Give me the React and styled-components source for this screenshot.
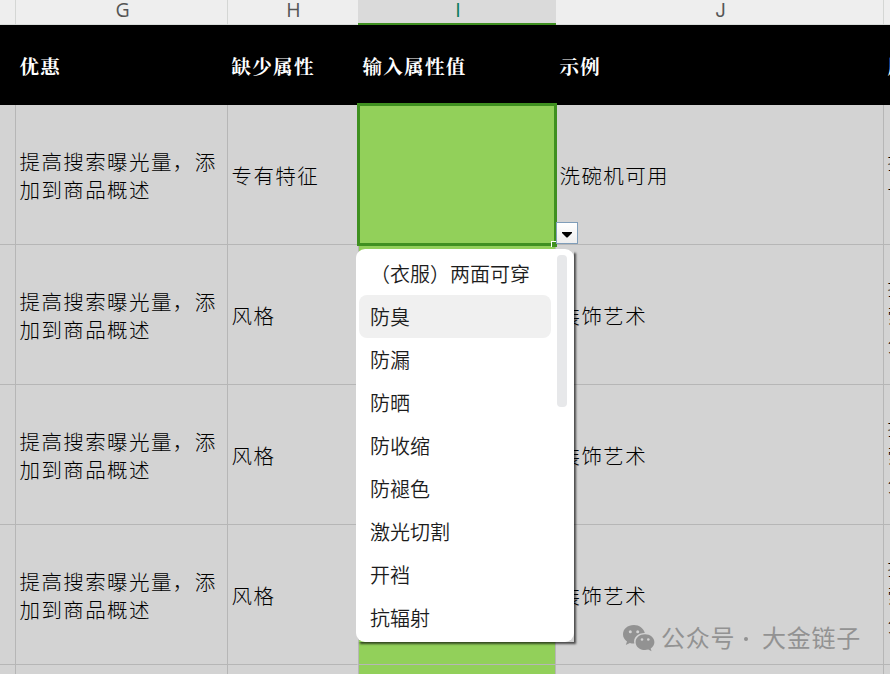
import React from "react";
import styled, { createGlobalStyle } from "styled-components";

const GlobalStyle = createGlobalStyle`
  * { box-sizing: border-box; }
  body { margin: 0; overflow: hidden; }
`;

const Sheet = styled.div`
  position: relative;
  width: 890px;
  height: 674px;
  overflow: hidden;
  background: #d3d3d3;
  color: #000;
  font-family: "Noto Sans CJK SC", sans-serif;
`;

const Row = styled.div`
  display: grid;
  grid-template-columns: 16px 212px 130px 198px 328px 160px;
  height: ${(p) => p.$height}px;
`;

const ColumnLabel = styled.div`
  display: flex;
  justify-content: center;
  height: 25px;
  padding-left: 2px;
  border-right: 1px solid ${(p) => (p.$plain ? "transparent" : "#d4d6d4")};
  border-bottom: 1px solid #d9dcda;
  background: #eeeeee;
  color: #555;
  font-family: ${(p) => (p.$hookless ? "Inter" : '"Open Sans"')}, sans-serif;
  font-size: ${(p) => (p.$hookless ? 18.5 : 19.5)}px;
  line-height: 20px;
  ${(p) =>
    p.$active &&
    `border-right: 0; border-bottom: 2px solid #3f9020; background: #dadada; color: #0d7a5c;`}
`;

const HeadCell = styled.div`
  display: flex;
  align-items: center;
  padding: 1px 0 0 ${(p) => (p.$inset ? 4.5 : 3.5)}px;
  background: #000;
  color: #fff;
  font-family: "Noto Serif CJK SC", "Noto Sans CJK SC", sans-serif;
  font-size: 19.5px;
  font-weight: 700;
  letter-spacing: 1.3px;
  white-space: nowrap;
`;

const Cell = styled.div`
  position: relative;
  display: flex;
  align-items: center;
  padding: 1px 0 0 3.5px;
  border-right: 1px solid ${(p) => (p.$open ? "transparent" : "#b6b6b6")};
  border-bottom: 1px solid #b6b6b6;
  font-size: 20.5px;
  font-weight: 300;
  line-height: 28px;
  letter-spacing: 1.4px;
  white-space: pre;
`;

const InputCell = styled(Cell)`
  z-index: ${(p) => (p.$selected ? 1 : "auto")};
  background: #92d05a;
  border-left: 1px solid #b6b6b6;
`;

const Selection = styled.div`
  position: absolute;
  top: -2px;
  left: -2px;
  width: 200px;
  height: 143px;
  border: 3px solid #3f9020;
`;

const FillHandle = styled.div`
  position: absolute;
  right: -3px;
  bottom: -4px;
  width: 6px;
  height: 6px;
  border-top: 1px solid #fff;
  border-left: 1px solid #fff;
  background: #3f9020;
`;

const ArrowButton = styled.button`
  position: absolute;
  top: 117px;
  left: 197px;
  z-index: 1;
  display: grid;
  place-items: center;
  width: 22px;
  height: 22px;
  padding: 3px 0 0;
  border: 1px solid #7f9db9;
  background: linear-gradient(#fff, #eeeeee);
`;

const Menu = styled.div`
  position: absolute;
  top: 249px;
  left: 356px;
  z-index: 2;
  width: 218px;
  height: 393px;
  box-shadow: 3px 3px 2px -1px rgba(0, 0, 0, 0.65);
`;

const MenuPanel = styled.div`
  display: flex;
  justify-content: space-between;
  height: 100%;
  padding: 3px 7px 3px 3px;
  border-radius: 9px;
  background: #fff;
`;

const Options = styled.ul`
  width: 192px;
  margin: 0;
  padding: 0;
  list-style: none;
`;

const Option = styled.li`
  height: 43px;
  padding-left: 11px;
  border-radius: 8px;
  background: ${(p) => (p.$active ? "#f0f0f0" : "transparent")};
  color: #1c1c1c;
  font-size: 20px;
  font-weight: 350;
  line-height: 43px;
  white-space: nowrap;
`;

const ScrollThumb = styled.div`
  width: 10px;
  height: 152px;
  margin-top: 3px;
  border-radius: 4px;
  background: #e7e8ea;
`;

const Watermark = styled.div`
  position: absolute;
  top: 620px;
  left: 622px;
  display: flex;
  align-items: center;
  height: 36px;
  color: #929292;
  font-size: 24px;
  letter-spacing: 0.7px;
  white-space: nowrap;
`;

const WatermarkName = styled.span`
  margin: -3px 0 0 ${(p) => p.$gap}px;
`;

const Dot = styled.span`
  width: 4px;
  height: 4px;
  margin: 2px 0 0 9px;
  border-radius: 50%;
  background: currentColor;
`;

const rows = [
  { missing: "专有特征", example: "洗碗机可用", extra: "提高\n一" },
  { missing: "风格", example: "装饰艺术", extra: "提高\n索引\n分" },
  { missing: "风格", example: "装饰艺术", extra: "提高\n索引\n分" },
  { missing: "风格", example: "装饰艺术", extra: "提高\n索引\n分" },
];

const options = ["（衣服）两面可穿", "防臭", "防漏", "防晒", "防收缩", "防褪色", "激光切割", "开裆", "抗辐射"];

function WeChatIcon() {
  return (
    <svg width="33" height="28" viewBox="0 0 33 28">
      <path
        fill="#929292"
        d="M12 1C5.5 1 1 5 1 10.300c0 3 1.500 5.500 4 7.200l-1.200 3.500 4.100-2.100c1.500.4 2.800.6 4.400.5C11 13.500 16 9 22.800 9.100 21.600 4.300 17.300 1 12 1Z"
      />
      <path
        fill="#929292"
        d="M23 10.300c-5.300 0-9.400 3.500-9.400 7.900s4.100 7.900 9.400 7.900c1.100 0 2.300-.2 3.300-.5l3.200 1.700-.8-2.800c2.200-1.500 3.700-3.800 3.700-6.300 0-4.400-4.200-7.900-9.400-7.900Z"
      />
      <circle cx="8.300" cy="7.700" r="1.500" fill="#d3d3d3" />
      <circle cx="15.700" cy="7.700" r="1.500" fill="#d3d3d3" />
      <circle cx="20" cy="15.500" r="1.300" fill="#d3d3d3" />
      <circle cx="26.300" cy="15.500" r="1.300" fill="#d3d3d3" />
    </svg>
  );
}

export default function App() {
  return (
    <>
      <GlobalStyle />
      <Sheet>
        <Row $height={25}>
          <ColumnLabel />
          <ColumnLabel>G</ColumnLabel>
          <ColumnLabel $plain>H</ColumnLabel>
          <ColumnLabel $active $hookless>I</ColumnLabel>
          <ColumnLabel $hookless>J</ColumnLabel>
          <ColumnLabel />
        </Row>
        <Row $height={80}>
          <HeadCell />
          <HeadCell>优惠</HeadCell>
          <HeadCell>缺少属性</HeadCell>
          <HeadCell $inset>输入属性值</HeadCell>
          <HeadCell>示例</HeadCell>
          <HeadCell>原因</HeadCell>
        </Row>
        {rows.map((row, i) => (
          <Row key={i} $height={140}>
            <Cell />
            <Cell>{"提高搜索曝光量，添\n加到商品概述"}</Cell>
            <Cell $open>{row.missing}</Cell>
            <InputCell $selected={i === 0}>
              {i === 0 && (
                <>
                  <Selection>
                    <FillHandle />
                  </Selection>
                  <ArrowButton aria-label="展开">
                    <svg width="10" height="6" viewBox="0 0 10 6">
                      <path d="M0 0h10v1L5.500 5.500h-1L0 1Z" fill="#000" />
                    </svg>
                  </ArrowButton>
                </>
              )}
            </InputCell>
            <Cell>{row.example}</Cell>
            <Cell>{row.extra}</Cell>
          </Row>
        ))}
        <Row $height={140}>
          <Cell />
          <Cell />
          <Cell $open />
          <InputCell />
          <Cell />
          <Cell />
        </Row>
        <Menu>
          <MenuPanel>
            <Options>
              {options.map((label, i) => (
                <Option key={label} $active={i === 1}>
                  {label}
                </Option>
              ))}
            </Options>
            <ScrollThumb />
          </MenuPanel>
        </Menu>
        <Watermark>
          <WeChatIcon />
          <WatermarkName $gap={6}>公众号</WatermarkName>
          <Dot />
          <WatermarkName $gap={14}>大金链子</WatermarkName>
        </Watermark>
      </Sheet>
    </>
  );
}
